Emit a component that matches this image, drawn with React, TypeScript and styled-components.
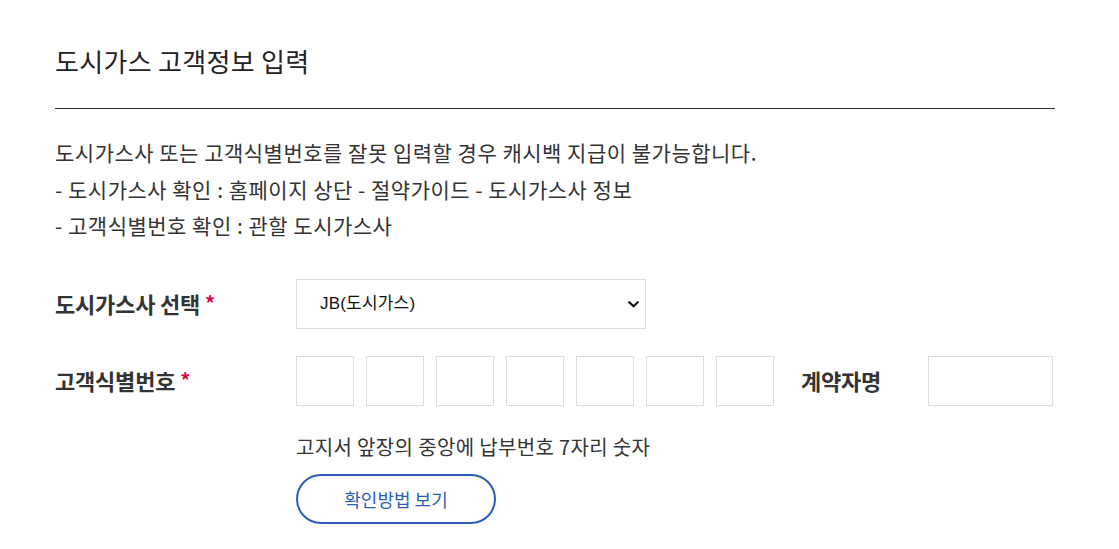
import React from "react";
import styled, { createGlobalStyle } from "styled-components";

const Global = createGlobalStyle`
  * { box-sizing: border-box; }
  body {
    margin: 0;
    background: #fff;
    font-family: "Noto Sans CJK KR", "Noto Sans", sans-serif;
    color: #333;
  }
`;

const Page = styled.div`
  width: 1000px;
  margin-left: 55px;
  padding-top: 43px;
`;

const Title = styled.h2`
  margin: 0;
  font-size: 26px;
  font-weight: 400;
  line-height: 36px;
  letter-spacing: 0.3px;
  color: #222;
  padding-bottom: 29px;
  border-bottom: 1px solid #333;
`;

const Notice = styled.div`
  padding-top: 25px;
  font-size: 21px;
  line-height: 36.5px;
  color: #333;
  letter-spacing: 0.5px;
`;

const NoticeLine = styled.p`
  margin: 0;
`;

const Form = styled.div`
  margin-top: 35px;
  display: flex;
  flex-direction: column;
  gap: 27px;
`;

const Row = styled.div`
  display: flex;
  align-items: center;
`;

const Label = styled.div<{ $width?: number }>`
  width: ${(p) => p.$width ?? 241}px;
  flex-shrink: 0;
  font-size: 22px;
  font-weight: 700;
  color: #333;
  letter-spacing: -0.2px;
  margin-top: -2px;
`;

const Req = styled.span`
  color: #e4003f;
  margin-left: 5px;
  font-weight: 700;
  font-size: 20px;
  position: relative;
  top: -2px;
`;

const SelectWrap = styled.div`
  position: relative;
  width: 350px;
  height: 50px;
`;

const Select = styled.select`
  appearance: none;
  -webkit-appearance: none;
  width: 100%;
  height: 100%;
  border: 1px solid #ddd;
  border-radius: 0;
  background: #fff;
  padding: 0 30px 0 23px;
  font-family: "Liberation Sans", "Noto Sans CJK KR", sans-serif;
  font-size: 17px;
  letter-spacing: 0.2px;
  color: #111;
  outline: none;
`;

const Chevron = styled.svg`
  position: absolute;
  right: 7px;
  top: 22px;
  width: 11px;
  height: 7px;
  pointer-events: none;
`;

const Boxes = styled.div`
  display: flex;
  gap: 12px;
`;

const Box = styled.input<{ $w?: number }>`
  width: ${(p) => p.$w ?? 58}px;
  height: 50px;
  border: 1px solid #ddd;
  background: #fff;
  padding: 0 8px;
  font-size: 16px;
  outline: none;
`;

const NameLabel = styled(Label)`
  margin-left: 27px;
`;

const Help = styled.div`
  margin-left: 241px;
  margin-top: -1px;
  display: flex;
  flex-direction: column;
  align-items: flex-start;
  gap: 12px;
`;

const HelpText = styled.p`
  margin: 0;
  font-size: 20px;
  line-height: 30px;
  color: #333;
  letter-spacing: 0.35px;
`;

const PillButton = styled.button`
  width: 200px;
  height: 50px;
  border: 2px solid #2d5cb8;
  border-radius: 25px;
  background: #fff;
  color: #2d5cb8;
  font-family: "Noto Sans CJK KR", sans-serif;
  font-size: 18px;
  cursor: pointer;
`;

export default function App() {
  return (
    <>
      <Global />
      <Page>
        <Title>도시가스 고객정보 입력</Title>
        <Notice>
          <NoticeLine>도시가스사 또는 고객식별번호를 잘못 입력할 경우 캐시백 지급이 불가능합니다.</NoticeLine>
          <NoticeLine>- 도시가스사 확인 : 홈페이지 상단 - 절약가이드 - 도시가스사 정보</NoticeLine>
          <NoticeLine>- 고객식별번호 확인 : 관할 도시가스사</NoticeLine>
        </Notice>
        <Form>
          <Row>
            <Label>
              도시가스사 선택<Req>*</Req>
            </Label>
            <SelectWrap>
              <Select defaultValue="jb">
                <option value="jb">JB(도시가스)</option>
              </Select>
              <Chevron viewBox="0 0 11 7" aria-hidden="true">
                <path d="M1.2 1.2 L5.5 5.3 L9.8 1.2" fill="none" stroke="#111" strokeWidth="2.2" strokeLinecap="round" strokeLinejoin="round" />
              </Chevron>
            </SelectWrap>
          </Row>
          <Row>
            <Label>
              고객식별번호<Req>*</Req>
            </Label>
            <Boxes>
              {Array.from({ length: 7 }).map((_, i) => (
                <Box key={i} maxLength={1} />
              ))}
            </Boxes>
            <NameLabel $width={127}>계약자명</NameLabel>
            <Box $w={125} />
          </Row>
          <Help>
            <HelpText>고지서 앞장의 중앙에 납부번호 7자리 숫자</HelpText>
            <PillButton>확인방법 보기</PillButton>
          </Help>
        </Form>
      </Page>
    </>
  );
}
